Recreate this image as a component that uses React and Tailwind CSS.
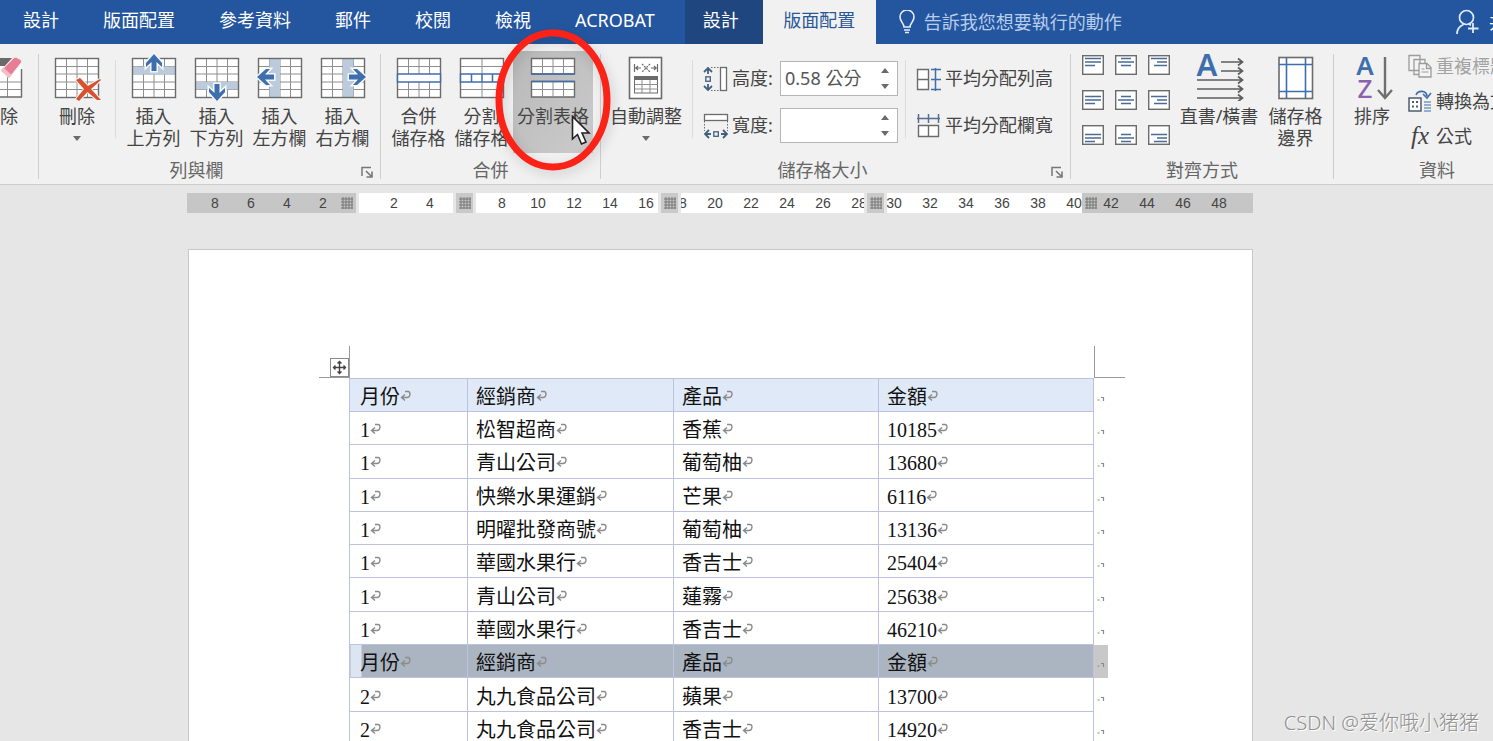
import React from "react";

const INK = "#6b6b6b";
const BLUE = "#3f6eac";

function Svg({ w, h, className = "", children }) {
  return (
    <svg
      width={w}
      height={h}
      viewBox={`0 0 ${w} ${h}`}
      fill="none"
      aria-hidden="true"
      className={`shrink-0 ${className}`}
    >
      {children}
    </svg>
  );
}

/* ---------- Ribbon icons ---------- */

function GridIcon({ band, children }) {
  return (
    <Svg w={50} h={50}>
      <rect x="3.5" y="7.5" width="43" height="39" fill="#fff" />
      <path d="M14.5 8v38M25 8v38M35.5 8v38M4 15.5h42M4 23h42M4 31h42M4 38.5h42" stroke="#8e8e8e" />
      {band && <rect x={band[0]} y={band[1]} width={band[2]} height={band[3]} fill="#bccbdc" />}
      <rect x="3.5" y="7.5" width="43" height="39" stroke={INK} strokeWidth="1.4" />
      {children}
    </Svg>
  );
}

const INSERT = {
  up: { band: [4, 15.5, 42, 8], at: "translate(25 12)" },
  down: { band: [4, 31, 42, 7.5], at: "translate(25 41) rotate(180)" },
  left: { band: [14.5, 8, 10.5, 38], at: "translate(11 26) rotate(-90)" },
  right: { band: [25, 8, 10.5, 38], at: "translate(39 26) rotate(90)" },
};

function InsertIcon({ side }) {
  return (
    <GridIcon band={INSERT[side].band}>
      <path
        d="M0 -9L8 0V4L2.5 -1V8H-2.5V-1L-8 4V0Z"
        transform={INSERT[side].at}
        fill={BLUE}
        stroke="#f4f8fd"
        strokeWidth="3"
        paintOrder="stroke"
      />
    </GridIcon>
  );
}

function DeleteIcon() {
  return (
    <GridIcon>
      <path
        d="M24 29L28 27L36 35L48 28L49 29L39 38L49 49L45 49L35.5 41L27 50L24 48L32 38Z"
        fill="#d9502f"
        stroke="#f3f3f3"
        strokeWidth="2"
        paintOrder="stroke"
      />
    </GridIcon>
  );
}

function EraserIcon() {
  return (
    <Svg w={24} h={50}>
      <path d="M0 7.5H21.5V46.5H0Z" fill="#fff" />
      <path d="M0 7h12l-7 8H0Z" fill="#6a6a6a" />
      <path d="M7.5 20v26M0 31h21M0 38.5h21" stroke="#8e8e8e" />
      <path d="M0 46H21.5V18" stroke={INK} strokeWidth="1.4" />
      <path
        d="M13 7.5Q14.500 5.500 16.500 6.500L20.500 8.500Q22.500 10 21 12L9 27L1 19.500Z"
        fill="#e67f95"
        stroke="#f6e6e9"
      />
      <path d="M1 19.5L9 27L11.5 24L3.500 16.500Z" fill="#f4bcc7" />
    </Svg>
  );
}

function MergeIcon() {
  return (
    <Svg w={50} h={50}>
      <rect x="3.5" y="7.5" width="43" height="39" fill="#fff" />
      <path
        d="M14.5 8v15M25 8v15M35.5 8v15M14.5 31v15M25 31v15M35.5 31v15M4 15.5h42M4 38.5h42"
        stroke="#8e8e8e"
      />
      <rect x="3.5" y="7.5" width="43" height="39" stroke={INK} strokeWidth="1.4" />
      <rect x="3.5" y="23" width="43" height="8" fill="#fff" stroke={BLUE} strokeWidth="1.5" />
    </Svg>
  );
}

function SplitCellIcon() {
  return (
    <Svg w={50} h={50}>
      <rect x="3.5" y="7.5" width="43" height="39" fill="#fff" />
      <path d="M25 8v15M25 31v15M4 15.5h42M4 38.5h42" stroke="#8e8e8e" />
      <rect x="3.5" y="7.5" width="43" height="39" stroke={INK} strokeWidth="1.4" />
      <path d="M3.5 23h43v8h-43zM14.5 23v8M25 23v8M35.5 23v8" fill="#fff" stroke={BLUE} strokeWidth="1.5" />
    </Svg>
  );
}

function SplitTableIcon() {
  return (
    <Svg w={50} h={50}>
      <path d="M3.5 7.5h43v15.5h-43zM3.5 30.5h43V46h-43z" fill="#fff" stroke={INK} strokeWidth="1.4" />
      <path
        d="M14.5 8v15M25 8v15M35.5 8v15M4 15.5h42M14.5 31v15M25 31v15M35.5 31v15M4 38.5h42"
        stroke="#8e8e8e"
      />
      <path d="M3.5 23h43M3.5 30.5h43" stroke={BLUE} strokeWidth="1.4" />
    </Svg>
  );
}

function AutoFitIcon() {
  return (
    <Svg w={50} h={50}>
      <rect x="8.5" y="6.5" width="32" height="41" fill="#fff" stroke={INK} strokeWidth="1.6" />
      <path
        d="M13.5 13v8M36.5 13v8M14 17h6M30 17h6M17 15l-2 2 2 2M33 15l2 2-2 2"
        stroke={INK}
        strokeWidth="1.2"
      />
      <path d="M21 13l8 8M29 13l-8 8" stroke={INK} strokeWidth="1.2" strokeDasharray="2 1" />
      <rect x="13.5" y="26" width="23" height="16" stroke={INK} />
      <rect x="13" y="25" width="24" height="4" fill={INK} />
      <path d="M21 29v13M29 29v13M14 33.5h23M14 38h23" stroke="#8e8e8e" />
    </Svg>
  );
}

function HeightIcon() {
  return (
    <Svg w={26} h={26}>
      <rect x="17.5" y="1.5" width="6" height="23" fill="#fff" stroke={INK} strokeWidth="1.3" />
      <path d="M8 1.5h9M8 24.5h9" stroke={INK} strokeDasharray="1.5 1.5" />
      <path d="M5 8V2M1 6l4-4 4 4M5 18v6M1 20l4 4 4-4" stroke="#41607f" strokeWidth="1.8" />
      <rect x="2.8" y="10.8" width="4.5" height="4.5" stroke="#41607f" strokeWidth="1.3" />
    </Svg>
  );
}

function WidthIcon() {
  return (
    <Svg w={26} h={26}>
      <rect x="1.5" y="1.5" width="23" height="6" fill="#fff" stroke={INK} strokeWidth="1.3" />
      <path d="M1.5 8v10M24.5 8v10" stroke={INK} strokeDasharray="1.5 1.5" />
      <path d="M8 21H2M6 17l-4 4 4 4M18 21h6M20 17l4 4-4 4" stroke="#41607f" strokeWidth="1.8" />
      <rect x="10.8" y="18.8" width="4.5" height="4.5" stroke="#41607f" strokeWidth="1.3" />
    </Svg>
  );
}

function RowsIcon() {
  return (
    <Svg w={26} h={26}>
      <path d="M1.5 3.5h11v20h-11zM1.5 13.5h11" fill="#fff" stroke={INK} strokeWidth="1.4" />
      <path d="M19.5 2v23M15 3.5h10M15 13.5h10M15 23.5h10" stroke={BLUE} strokeWidth="1.5" />
    </Svg>
  );
}

function ColumnsIcon() {
  return (
    <Svg w={26} h={26}>
      <path d="M2.5 12.5h20v11h-20zM12.5 12.5v11" fill="#fff" stroke={INK} strokeWidth="1.4" />
      <path d="M1 5.5h23M2.5 1v9M12.5 1v9M22.5 1v9" stroke="#556f92" strokeWidth="1.5" />
    </Svg>
  );
}

const LINE_WIDTHS = [
  [16, 16, 10],
  [10, 16, 10],
  [16, 10, 13],
];

function AlignIcon({ v, h }) {
  const top = [3.5, 6.5, 9.5][v];
  const lines = LINE_WIDTHS[h]
    .map((w, i) => {
      const x = [3, 3 + (16 - w) / 2, 19 - w][h];
      return `M${x} ${top + i * 3.5}h${w}`;
    })
    .join("");
  return (
    <Svg w={22} h={20}>
      <rect x="0.7" y="0.7" width="20.6" height="18.6" fill="#fff" stroke={INK} strokeWidth="1.4" />
      <path d={lines} stroke="#4a6b93" strokeWidth="1.5" />
    </Svg>
  );
}

function DirectionIcon() {
  return (
    <Svg w={50} h={50}>
      <text
        x="13"
        y="25"
        textAnchor="middle"
        fill={BLUE}
        className="font-['Noto_Sans',sans-serif] text-[31px] font-semibold"
      >
        A
      </text>
      {[11, 20, 29, 38, 47].map((y, i) => (
        <path
          key={y}
          d={`M${i < 2 ? 27 : 3} ${y}H48M44 ${y - 3.5}l4.5 3.5-4.5 3.5`}
          stroke="#5d5d5d"
          strokeWidth="1.7"
        />
      ))}
    </Svg>
  );
}

function MarginsIcon() {
  return (
    <Svg w={50} h={50}>
      <rect x="8" y="6.5" width="33.5" height="41" fill="#fff" stroke={INK} strokeWidth="1.6" />
      <path d="M15.5 7v40M34.5 7v40M8 13.5h33M8 40.5h33" stroke={BLUE} strokeWidth="1.6" />
    </Svg>
  );
}

function SortIcon() {
  return (
    <Svg w={50} h={50}>
      <g className="font-['Noto_Sans',sans-serif] text-[26px] font-semibold">
        <text x="18" y="24" textAnchor="middle" fill={BLUE}>
          A
        </text>
        <text x="18" y="47" textAnchor="middle" fill="#8a62ae" className="font-medium">
          Z
        </text>
      </g>
      <path d="M38 6v41M31 39l7 8 7-8" stroke="#6f6f6f" strokeWidth="2.4" />
    </Svg>
  );
}

function RepeatIcon() {
  return (
    <Svg w={24} h={24}>
      <path d="M1 1.5h11v15H1zM6 5.5h11v15H6z" fill="#f4f4f4" stroke="#9c9c9c" strokeWidth="1.3" />
      <path d="M11 9.5h8l4 4v9.5H11zM18.5 9.5v5h5" fill="#f4f4f4" stroke="#9c9c9c" strokeWidth="1.3" />
      <path d="M13.5 15h3M13.5 18h7" stroke="#9c9c9c" />
    </Svg>
  );
}

function ConvertIcon() {
  return (
    <Svg w={24} h={24}>
      <rect x="1" y="9" width="12" height="13" fill="#fff" stroke="#4c5c70" strokeWidth="1.5" />
      <path d="M4 13h2M8 13h2M4 17.5h2M8 17.5h2" stroke="#4c5c70" strokeWidth="2" />
      <path d="M8 6c2-5 10-5 11 1M15 5l4 4 4-5" stroke={BLUE} strokeWidth="1.6" />
      <path d="M16 13h7M16 16h7M16 19h7M16 22h7" stroke={BLUE} strokeWidth="1.2" />
    </Svg>
  );
}

function FormulaIcon() {
  return (
    <span
      aria-hidden="true"
      className="w-6 shrink-0 text-center font-['Liberation_Serif',serif] text-[25px] leading-6 text-[#444] italic"
    >
      fx
    </span>
  );
}

function Launcher() {
  return (
    <button type="button" aria-label="更多選項" className="flex h-[22px] w-[26px] items-center justify-center pt-1">
      <Svg w={12} h={12}>
        <path d="M1 10V1.5h9" stroke="#777" strokeWidth="1.5" />
        <path d="M5 5l5 5M11 5.5V11H5.5" stroke="#777" strokeWidth="1.6" />
      </Svg>
    </button>
  );
}

/* ---------- Ribbon building blocks ---------- */

function Separator() {
  return <div className="mt-[10px] h-[125px] w-px shrink-0 bg-[#cfcfcf]" />;
}

function ShortSeparator({ className }) {
  return <div className={`mt-[9px] h-[78px] w-px shrink-0 bg-[#dcdcdc] ${className}`} />;
}

function Group({ label, launcher, className = "", children }) {
  return (
    <section aria-label={label} className="flex shrink-0 flex-col">
      <div className={`flex h-[115px] items-start pt-[7px] ${className}`}>{children}</div>
      <div className="flex">
        <div className="flex-1 text-center leading-[22px] text-[#666]">{label}</div>
        {launcher && <Launcher />}
      </div>
    </section>
  );
}

function BigButton({ icon, lines, menu, className = "w-[63px]", children }) {
  return (
    <button
      type="button"
      className={`relative flex shrink-0 flex-col items-center pb-1 leading-[22px] whitespace-nowrap ${className}`}
    >
      {icon}
      <span className="mt-1">
        {lines.map((line) => (
          <span key={line} className="block">
            {line}
          </span>
        ))}
      </span>
      {menu && (
        <Svg w={10} h={22}>
          <path d="M1 9h8l-4 5z" fill="#6b6b6b" />
        </Svg>
      )}
      {children}
    </button>
  );
}

function SizeField({ id, icon, label, value }) {
  return (
    <div className="flex h-[35px] items-center">
      {icon}
      <label htmlFor={id} className="ml-[3px] w-12">
        {label}
      </label>
      <div className="flex h-full w-[118px] border border-[#b5b5b5] bg-white">
        <input
          id={id}
          type="text"
          defaultValue={value}
          className="w-[92px] bg-transparent pl-1 text-[#555] outline-none"
        />
        <div className="flex flex-1 flex-col">
          <button type="button" aria-label={`${label} 增加`} className="flex flex-1 items-center justify-center pt-px">
            <Svg w={8} h={5}>
              <path d="M0 5h8L4 0z" fill="#6b6b6b" />
            </Svg>
          </button>
          <button type="button" aria-label={`${label} 減少`} className="flex flex-1 items-center justify-center pb-px">
            <Svg w={8} h={5}>
              <path d="M0 0h8L4 5z" fill="#6b6b6b" />
            </Svg>
          </button>
        </div>
      </div>
    </div>
  );
}

function LineButton({ icon, text, className = "" }) {
  return (
    <button type="button" className={`flex items-center whitespace-nowrap ${className}`}>
      {icon}
      {text}
    </button>
  );
}

/* ---------- Tab bar ---------- */

const TABS = ["設計", "版面配置", "參考資料", "郵件", "校閱", "檢視", "ACROBAT"];

function TabBar() {
  return (
    <header className="flex h-11 shrink-0 items-stretch bg-[#24569f] leading-[40px] text-white">
      <nav className="flex shrink-0 pr-2 pl-px whitespace-nowrap">
        {TABS.map((t) => (
          <a key={t} href="#" className="px-[22px]">
            {t}
          </a>
        ))}
      </nav>
      <a href="#" className="w-[78px] shrink-0 bg-[#1f467f] pr-[6px] text-center">
        設計
      </a>
      <a href="#" aria-current="page" className="w-[113px] shrink-0 bg-[#f1f1f1] text-center text-[#2b5797]">
        版面配置
      </a>
      <button type="button" className="ml-[22px] flex shrink-0 items-center text-[#b7cdec]">
        <Svg w={18} h={24} className="mr-2">
          <path
            d="M6 17c0-4-4-5-4-10a7 7 0 0 1 14 0c0 5-4 6-4 10zM6 20h6M7 22.5h4"
            stroke="#e4eefb"
            strokeWidth="1.6"
          />
        </Svg>
        告訴我您想要執行的動作
      </button>
      <button
        type="button"
        className="ml-auto flex w-[38px] shrink-0 items-center gap-[10px] overflow-hidden whitespace-nowrap"
      >
        <Svg w={24} h={26}>
          <circle cx="11.5" cy="8.5" r="7" stroke="#dfeafa" strokeWidth="1.7" />
          <path
            d="M2 25c0-5 3-8 6.5-9.5M14 15c1 .5 1 .8 2 1M18 14v10M13 19.5h10.5"
            stroke="#dfeafa"
            strokeWidth="1.8"
          />
        </Svg>
        共用
      </button>
    </header>
  );
}

/* ---------- Ribbon ---------- */

function Ribbon() {
  return (
    <div className="flex h-[141px] shrink-0 border-b border-[#cdcdcd] bg-[#f1f1f1] text-[#444]">
      <div className="w-[38px] shrink-0 pt-[7px]">
        <button type="button" className="flex flex-col items-start leading-[22px]">
          <EraserIcon />
          <span className="mt-1">除</span>
        </button>
      </div>
      <Separator />

      <Group label="列與欄" launcher className="pr-[6px] pl-2">
        <BigButton icon={<DeleteIcon />} lines={["刪除"]} menu className="w-[60px]" />
        <ShortSeparator className="mr-[6px] ml-2" />
        <BigButton icon={<InsertIcon side="up" />} lines={["插入", "上方列"]} />
        <BigButton icon={<InsertIcon side="down" />} lines={["插入", "下方列"]} />
        <BigButton icon={<InsertIcon side="left" />} lines={["插入", "左方欄"]} />
        <BigButton icon={<InsertIcon side="right" />} lines={["插入", "右方欄"]} />
      </Group>
      <Separator />

      <Group label="合併" className="pr-[7px] pl-[6px]">
        <BigButton icon={<MergeIcon />} lines={["合併", "儲存格"]} />
        <BigButton icon={<SplitCellIcon />} lines={["分割", "儲存格"]} />
        <BigButton
          icon={<SplitTableIcon />}
          lines={["分割表格"]}
          className="h-[102px] w-20 bg-linear-to-br from-[#b9b9b9] to-[#cbcbcb]"
        >
          <Svg
            w={116}
            h={142}
            className="absolute -top-[22px] -left-[18px] z-10 drop-shadow-[2px_4px_6px_rgba(0,0,0,0.15)]"
          >
            <ellipse cx="58" cy="71" rx="54" ry="67" stroke="#fb2217" strokeWidth="7" />
          </Svg>
          <Svg w={20} h={32} className="absolute top-16 left-[58px] z-20">
            <path d="M1.5 1.5V24l5-4.5 4 9.5 4.5-2-4-9h7z" fill="#fff" stroke="#222" strokeWidth="1.6" />
          </Svg>
        </BigButton>
      </Group>
      <Separator />

      <Group label="儲存格大小" launcher className="pr-[17px] pl-[6px]">
        <BigButton icon={<AutoFitIcon />} lines={["自動調整"]} menu className="w-[78px]" />
        <ShortSeparator className="mr-[10px] ml-[7px]" />
        <div className="flex flex-col gap-3 pt-[10px]">
          <SizeField id="row-height" icon={<HeightIcon />} label="高度:" value="0.58 公分" />
          <SizeField id="col-width" icon={<WidthIcon />} label="寬度:" value="" />
        </div>
        <ShortSeparator className="mr-[10px] ml-[7px]" />
        <div className="flex flex-col gap-3 pt-[10px]">
          <LineButton icon={<RowsIcon />} text="平均分配列高" className="h-[35px] gap-[3px]" />
          <LineButton icon={<ColumnsIcon />} text="平均分配欄寬" className="h-[35px] gap-[3px]" />
        </div>
      </Group>
      <Separator />

      <Group label="對齊方式" className="pr-[6px] pl-[11px]">
        <div className="grid grid-cols-3 gap-x-[11px] gap-y-[15px] pt-1">
          {["上", "中", "下"].map((v, vi) =>
            ["左", "中", "右"].map((h, hi) => (
              <button key={v + h} type="button" aria-label={`對齊${v}${h}`} className="h-5 w-[22px]">
                <AlignIcon v={vi} h={hi} />
              </button>
            )),
          )}
        </div>
        <BigButton icon={<DirectionIcon />} lines={["直書/橫書"]} className="mr-[3px] ml-[7px] w-[84px]" />
        <BigButton icon={<MarginsIcon />} lines={["儲存格", "邊界"]} />
      </Group>
      <Separator />

      <Group label="資料" className="pr-[14px] pl-2">
        <BigButton icon={<SortIcon />} lines={["排序"]} className="w-[60px]" />
        <div className="ml-[6px] flex flex-col gap-[11px] pt-[3px]">
          <LineButton icon={<RepeatIcon />} text="重複標題列" className="h-6 gap-1 text-[#a3a3a3]" />
          <LineButton icon={<ConvertIcon />} text="轉換為文字" className="h-6 gap-1" />
          <LineButton icon={<FormulaIcon />} text="公式" className="h-6 gap-1" />
        </div>
      </Group>
    </div>
  );
}

/* ---------- Ruler ---------- */

function RulerGrip() {
  return (
    <Svg w={12} h={12}>
      <path d="M2 0v12M5 0v12M8 0v12M11 0v12M0 2h12M0 5h12M0 8h12M0 11h12" stroke="#777" />
    </Svg>
  );
}

function RulerNumbers({ values, className = "" }) {
  return (
    <div className={`flex shrink-0 ${className}`}>
      {values.map((v) => (
        <span key={v} className="w-9 shrink-0 text-center">
          {v}
        </span>
      ))}
    </div>
  );
}

function ColumnGrip() {
  return (
    <div className="mx-[3px] flex w-[17px] shrink-0 items-center justify-center bg-[#c9c9c9]">
      <RulerGrip />
    </div>
  );
}

function Ruler() {
  return (
    <div className="mt-2 flex h-5 shrink-0 overflow-hidden font-['Liberation_Sans',sans-serif] text-sm leading-5 text-[#444]">
      <div className="mr-[3px] flex w-[169px] shrink-0 items-center bg-[#c6c6c6] pl-[10px]">
        <RulerNumbers values={[8, 6, 4, 2]} />
        <RulerGrip />
      </div>
      <div className="w-[94px] shrink-0 overflow-hidden bg-white pl-[17px]">
        <RulerNumbers values={[2, 4]} />
      </div>
      <ColumnGrip />
      <div className="w-[182px] shrink-0 overflow-hidden bg-white pl-2">
        <RulerNumbers values={[8, 10, 12, 14, 16]} />
      </div>
      <ColumnGrip />
      <div className="w-[183px] shrink-0 overflow-hidden bg-white">
        <RulerNumbers values={[18, 20, 22, 24, 26, 28]} className="-ml-5" />
      </div>
      <ColumnGrip />
      <div className="w-[195px] shrink-0 overflow-hidden bg-white">
        <RulerNumbers values={[30, 32, 34, 36, 38, 40]} className="-ml-[11px]" />
      </div>
      <div className="flex flex-1 items-center overflow-hidden bg-[#c6c6c6] pl-[3px]">
        <RulerGrip />
        <RulerNumbers values={[42, 44, 46, 48]} className="-ml-1" />
      </div>
    </div>
  );
}

/* ---------- Document ---------- */

const HEAD = ["月份", "經銷商", "產品", "金額"];
const ROWS = [
  ["1", "松智超商", "香蕉", "10185"],
  ["1", "青山公司", "葡萄柚", "13680"],
  ["1", "快樂水果運銷", "芒果", "6116"],
  ["1", "明曜批發商號", "葡萄柚", "13136"],
  ["1", "華國水果行", "香吉士", "25404"],
  ["1", "青山公司", "蓮霧", "25638"],
  ["1", "華國水果行", "香吉士", "46210"],
  HEAD,
  ["2", "丸九食品公司", "蘋果", "13700"],
  ["2", "丸九食品公司", "香吉士", "14920"],
];

function ReturnMark() {
  return (
    <Svg w={11} h={14} className="inline-block align-baseline">
      <path d="M5 1.500h3c3 0 2.500 6-1 6H2M5 4.500L1.500 7.500 5 10.500" stroke="#8b8b8b" strokeWidth="1.400" />
    </Svg>
  );
}

function RowEndMark() {
  return (
    <Svg w={8} h={6} className="mt-2 ml-[3px]">
      <path d="M0.5 4h2M4 1.5h2.5V5" stroke="#8b8b8b" strokeWidth="1.2" />
    </Svg>
  );
}

function Row({ cells, kind }) {
  const selected = kind === "selected";
  const Cell = kind === "head" ? "th" : "td";
  const tone = kind === "head" ? "bg-[#dfe9f7]" : selected ? "bg-[#abb5c1]" : "";
  const firstTone = selected ? "bg-[linear-gradient(to_right,#dde4f2_11px,#abb5c1_11px)]" : tone;
  return (
    <tr className="h-[33px]">
      {cells.map((c, i) => (
        <Cell
          key={i}
          className={`border border-[#bdc2df] pt-1 text-left font-normal whitespace-nowrap ${
            i === 0 ? `pl-[10px] ${firstTone}` : `pl-2 ${tone}`
          }`}
        >
          {c}
          <ReturnMark />
        </Cell>
      ))}
      <td className={`bg-clip-padding ${selected ? "bg-[#c8c8c8]" : ""}`}>
        <RowEndMark />
      </td>
    </tr>
  );
}

function Page() {
  return (
    <main className="mt-9 ml-px min-h-0 flex-1 border border-b-0 border-[#c9c9c9] bg-white pt-24 pr-[127px] pl-[130px]">
      <div className="flex h-8 justify-between">
        <div className="flex w-[31px] items-end justify-end border-r border-b border-[#9a9a9a]">
          <button
            type="button"
            aria-label="移動表格"
            className="flex size-[19px] items-center justify-center border border-[#8a8a8a] bg-white"
          >
            <Svg w={15} h={15}>
              <path
                d="M7.5 1v13M1 7.5h13M5.5 3.5l2-2 2 2M5.5 11.5l2 2 2-2M3.5 5.5l-2 2 2 2M11.5 5.5l2 2-2 2"
                stroke="#444"
                strokeWidth="1.4"
              />
            </Svg>
          </button>
        </div>
        <div className="w-[31px] border-b border-l border-[#9a9a9a]" />
      </div>
      <div className="pr-[18px] pl-[30px]">
        <table className="h-[367px] w-full table-fixed border-collapse font-['Liberation_Serif','Noto_Sans_CJK_TC',serif] text-xl leading-6 text-[#111]">
          <colgroup>
            <col className="w-[118px]" />
            <col className="w-[206px]" />
            <col className="w-[205px]" />
            <col className="w-[215px]" />
            <col className="w-[14px]" />
          </colgroup>
          <thead>
            <Row cells={HEAD} kind="head" />
          </thead>
          <tbody>
            {ROWS.map((r, i) => (
              <Row key={i} cells={r} kind={r === HEAD ? "selected" : "body"} />
            ))}
          </tbody>
        </table>
      </div>
    </main>
  );
}

export default function App() {
  return (
    <div className="relative flex h-screen flex-col overflow-hidden bg-[#e6e6e6] font-['Noto_Sans','Noto_Sans_CJK_TC',sans-serif] text-[18px]">
      <TabBar />
      <Ribbon />
      <div className="flex min-h-0 flex-1 flex-col overflow-hidden pr-[240px] pl-[187px]">
        <Ruler />
        <Page />
      </div>
      <div className="absolute right-[14px] bottom-1 font-['Noto_Sans','Noto_Sans_CJK_SC',sans-serif] text-[20px] leading-7 font-light text-[#8f8f8f] [text-shadow:1px_1px_0_#fff]">
        CSDN @爱你哦小猪猪
      </div>
    </div>
  );
}
